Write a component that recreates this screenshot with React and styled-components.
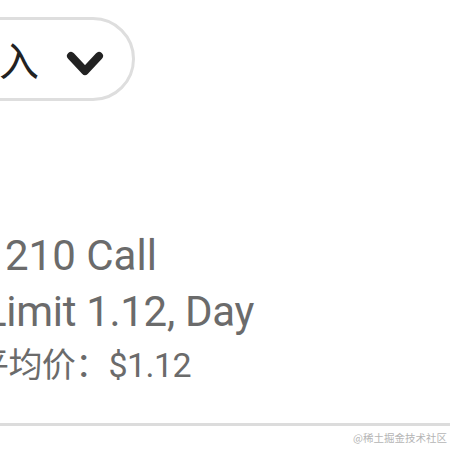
import React from "react";
import styled, { createGlobalStyle } from "styled-components";

const Global = createGlobalStyle`
  html, body { margin: 0; padding: 0; background: #ffffff; }
  body { font-family: Roboto, "Noto Sans CJK SC", sans-serif; }
`;

const Page = styled.div`
  width: 450px;
  height: 450px;
  overflow: hidden;
  display: flex;
  flex-direction: column;
  background: #fff;
`;

const Header = styled.div`
  padding-top: 17px;
  display: flex;
`;

const Pill = styled.div`
  box-sizing: border-box;
  width: 335px;
  height: 84px;
  margin-left: -200px;
  border: 3px solid #dedede;
  border-radius: 42px;
  display: flex;
  align-items: center;
  justify-content: flex-end;
  padding-right: 27px;
  gap: 26px;
`;

const PillLabel = styled.span`
  font-family: "Noto Sans CJK SC", sans-serif;
  font-size: 40px;
  line-height: 1;
  color: #222;
`;

const Chevron = styled.svg`
  display: block;
  flex: none;
  margin-top: 12px;
`;

const Lines = styled.div`
  margin-top: 127px;
  display: flex;
  flex-direction: column;
  white-space: nowrap;
`;

const Line = styled.div`
  font-family: Roboto, "Noto Sans CJK SC", sans-serif;
  font-size: ${(p) => p.$size}px;
  line-height: ${(p) => p.$lh}px;
  height: ${(p) => p.$lh}px;
  letter-spacing: ${(p) => p.$track}px;
  color: #6b6b6b;
  margin-left: ${(p) => p.$shift}px;
`;

const Divider = styled.div`
  margin-top: 33px;
  height: 3px;
  background: #dcdcdc;
  flex: none;
`;

const Watermark = styled.div`
  margin-top: 5px;
  text-align: right;
  padding-right: 3px;
  font-family: "Noto Sans CJK SC", sans-serif;
  font-size: 10.5px;
  line-height: 14px;
  color: #b5b5b5;
`;

export default function App() {
  return (
    <Page>
      <Global />
      <Header>
        <Pill>
          <PillLabel>入</PillLabel>
          <Chevron width="40" height="30" viewBox="0 0 40 30">
            <path
              d="M6 6 L20 21 L34 6"
              fill="none"
              stroke="#222"
              strokeWidth="8"
              strokeLinecap="round"
              strokeLinejoin="round"
            />
          </Chevron>
        </Pill>
      </Header>
      <Lines>
        <Line $size={42} $lh={56} $shift={5} $track={0}>210 Call</Line>
        <Line $size={42} $lh={56} $shift={-16} $track={-0.3}>Limit 1.12, Day</Line>
        <Line $size={34} $lh={50} $shift={-25} $track={-0.6}>平均价：$1.12</Line>
      </Lines>
      <Divider />
      <Watermark>@稀土掘金技术社区</Watermark>
    </Page>
  );
}
